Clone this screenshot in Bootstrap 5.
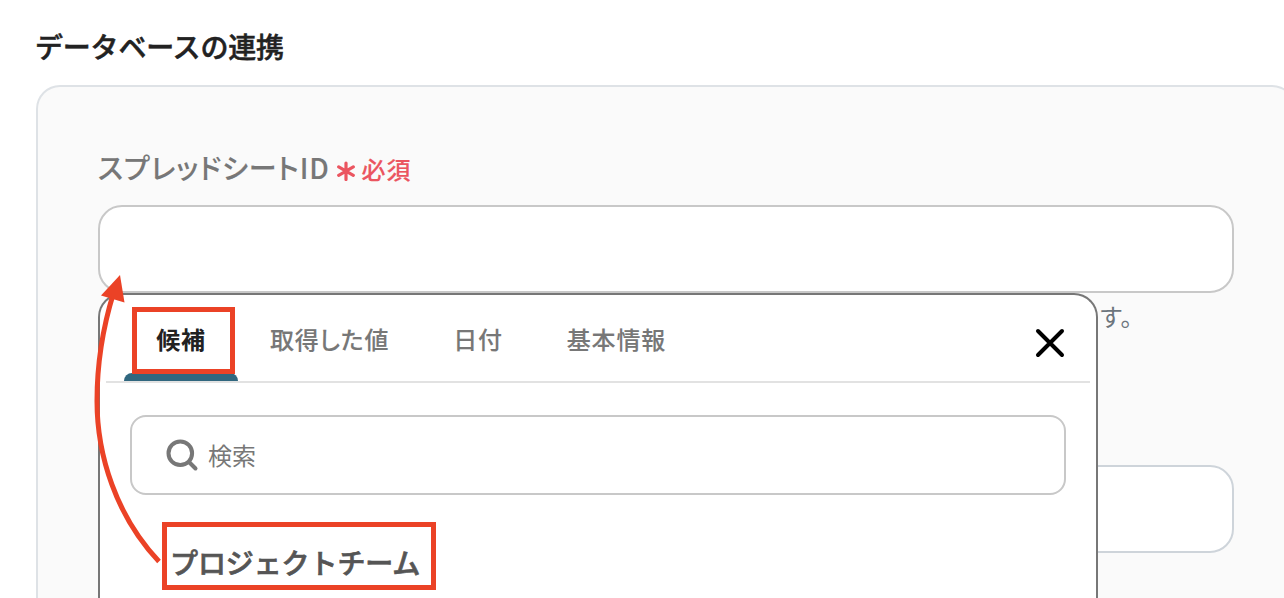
<!DOCTYPE html>
<html lang="ja">
<head>
    <meta charset="UTF-8">
    <meta name="viewport" content="width=device-width, initial-scale=1">
    <title>データベースの連携</title>
    <link href="https://cdn.jsdelivr.net/npm/bootstrap@5.3.2/dist/css/bootstrap.min.css" rel="stylesheet">

    <style>
        body {
            height: 598px;
            overflow: hidden;
            background-color: #fff;
            color: #222;
            font-family: "Noto Sans CJK JP", sans-serif;
            font-feature-settings: "palt";
            letter-spacing: 0.04em;
        }
        .page {
            width: 1296px;
            height: 598px;
            padding: 26px 0 0 35px;
            overflow: hidden;
        }
        .page-title {
            font-size: 28px;
            line-height: 40px;
            font-weight: 500;
            font-feature-settings: normal;
            letter-spacing: -0.2px;
            -webkit-text-stroke: 0.5px currentColor;
            margin-bottom: 19px;
        }
        .panel {
            height: 513px;
            margin-left: 1px;
            padding: 60px 60px 0;
            background-color: #fafafa;
            border: 2px solid #dee2e6;
            border-bottom: 0;
            border-radius: 24px 24px 0 0;
        }
        .field-label {
            height: 40px;
            margin-bottom: 18px;
            color: #777;
            font-size: 28px;
            line-height: 38px;
            font-weight: 500;
            letter-spacing: 0.85px;
            -webkit-text-stroke: 0.1px currentColor;
        }
        .required {
            color: #eb5560;
            font-size: 24px;
            gap: 6px;
            margin-left: 6px;
            padding-top: 3px;
        }
        .required svg {
            margin-top: 5px;
        }
        .field-input {
            height: 88px;
            border: 2px solid #c8c8c8;
            border-radius: 24px;
        }
        .field-input.is-plain {
            border-color: #ced4da;
        }
        .field-help {
            height: 172px;
            padding: 6px 101px 0 0;
            color: #6c757d;
            font-size: 24px;
            line-height: 34px;
        }
        .picker {
            top: 88px;
            left: 0;
            width: 1000px;
            height: 305px;
            padding: 0 6px;
            background-color: #fff;
            border: 2px solid #777;
            border-bottom: 0;
            border-radius: 24px 24px 0 0;
        }
        .picker-head {
            height: 88px;
            padding: 0 22px 0 18px;
            border-bottom: 2px solid #e2e2e2;
        }
        .picker-tab {
            position: relative;
            height: 86px;
            padding: 0 32px;
            border: 0;
            background: none;
            color: #777;
            font-size: 24px;
            line-height: 88px;
            font-weight: 500;
            letter-spacing: 0.8px;
            font-feature-settings: inherit;
            white-space: nowrap;
            -webkit-text-stroke: 0.1px currentColor;
        }
        .picker-tab.active {
            width: 114px;
            color: #222;
            font-weight: 700;
            -webkit-text-stroke: 0;
        }
        .picker-tab.active::after {
            content: "";
            position: absolute;
            left: 0;
            right: 0;
            bottom: 0;
            height: 8px;
            background-color: #30677f;
            border-radius: 8px 8px 0 0;
        }
        .picker-close {
            width: 36px;
            height: 36px;
            padding: 0;
            border: 0;
            background: none;
            margin-top: 10px;
        }
        .picker-search {
            height: 80px;
            margin: 32px 24px 0;
            padding-left: 33px;
            border: 2px solid #c8c8c8;
            border-radius: 16px;
            color: #777;
            font-size: 24px;
            letter-spacing: 0;
            gap: 9px;
        }
        .picker-item {
            margin: 47px 0 0 64px;
            color: #555;
            font-size: 28px;
            line-height: 40px;
            font-weight: 500;
            font-feature-settings: normal;
            letter-spacing: -0.1px;
            -webkit-text-stroke: 0.7px currentColor;
        }
        /* red annotations drawn over the form */
        .note-layer {
            top: 0;
            left: 0;
            z-index: 10;
            pointer-events: none;
        }
    </style>
</head>
<body>

<div class="page">
    <h1 class="page-title">データベースの連携</h1>
    <div class="panel">
        <div class="field-label d-flex align-items-center">
            <span>スプレッドシートID</span>
            <span class="required d-flex align-items-center">
                <svg width="20" height="20" viewBox="0 0 20 20" fill="none" stroke="currentColor" stroke-width="3.2" stroke-linecap="round"><path d="M10 2v16.500M2.700 5.900l14.600 8.400M17.300 5.900L2.700 14.300"/></svg>
                <span>必須</span>
            </span>
        </div>
        <div class="position-relative">
            <div class="field-input bg-white"></div>
            <div class="field-help text-end">す。</div>
            <div class="field-input is-plain bg-white"></div>

            <div class="picker position-absolute">
                <div class="picker-head d-flex align-items-center">
                    <button type="button" class="picker-tab active">候補</button>
                    <button type="button" class="picker-tab">取得した値</button>
                    <button type="button" class="picker-tab">日付</button>
                    <button type="button" class="picker-tab">基本情報</button>
                    <button type="button" class="picker-close d-flex ms-auto" aria-label="閉じる">
                        <svg width="36" height="36" viewBox="0 0 36 36" fill="none" stroke="#000" stroke-width="4" stroke-linecap="round"><path d="M6 6l24 24M30 6L6 30"/></svg>
                    </button>
                </div>
                <div class="picker-search d-flex align-items-center">
                    <svg width="34" height="34" viewBox="0 0 34 34" fill="none" stroke="#777" stroke-width="4" stroke-linecap="round"><circle cx="15.300" cy="15.300" r="11.800"/><path d="M24 24l6.500 6.500"/></svg>
                    <span>検索</span>
                </div>
                <div class="picker-item">プロジェクトチーム</div>
            </div>
        </div>
    </div>
</div>

<svg class="note-layer position-absolute" width="1284" height="598" viewBox="0 0 1284 598" fill="none" stroke="#eb4226" stroke-width="5">
    <rect x="134.5" y="309.5" width="98" height="62"/>
    <rect x="164.5" y="524.5" width="269" height="63"/>
    <path d="M159 561.5C116 516 97 455 97 401C97 365 103 327 113.500 293"/>
    <path d="M120 275L101 295.500L124.500 302.500Z" fill="#eb4226" stroke="none"/>
</svg>

<script src="https://cdn.jsdelivr.net/npm/bootstrap@5.3.2/dist/js/bootstrap.bundle.min.js"></script>
</body>
</html>
